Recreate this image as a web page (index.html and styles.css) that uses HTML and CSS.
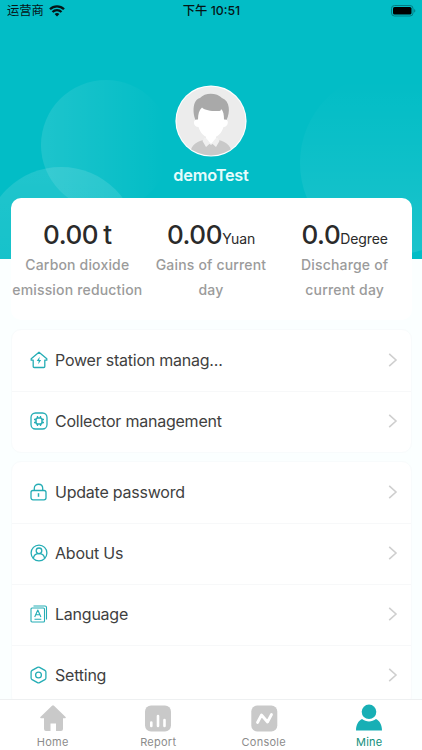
FILE: index.html
```html
<!DOCTYPE html>
<html lang="en">
<head>
    <meta charset="UTF-8">
    <meta name="viewport" content="width=device-width, initial-scale=1.0">
    <title>Mine</title>
    <link rel="stylesheet" href="styles.css">
</head>
<body>
    <div class="app">
        <header class="header">
            <!-- Background bubbles -->
            <div class="bubble bubble-top"></div>
            <div class="bubble bubble-left"></div>
            <div class="bubble bubble-right"></div>

            <div class="status-bar">
                <div class="carrier">
                    <span>运营商</span>
                    <svg width="16" height="12" viewBox="0 0 16 12" fill="none" stroke="#061416" stroke-width="2.3">
                        <path d="M1 4.2a10 10 0 0 1 14 0"/>
                        <path d="M3.5 7a6.4 6.4 0 0 1 9 0"/>
                        <path d="M8 11.6 5.6 9.1a3.4 3.4 0 0 1 4.8 0z" fill="#061416" stroke="none"/>
                    </svg>
                </div>
                <span class="time">下午 10:51</span>
                <svg class="battery" width="25" height="12" viewBox="0 0 25 12">
                    <rect x="0.5" y="0.5" width="21.5" height="10.5" rx="3" fill="none" stroke="#037c84"/>
                    <rect x="2" y="2" width="18.5" height="7.5" rx="1.6" fill="#000"/>
                    <path d="M23.2 4v3.6c1.5-.5 1.5-3.1 0-3.6z" fill="#037c84"/>
                </svg>
            </div>

            <div class="profile">
                <svg class="avatar" width="72" height="72" viewBox="0 0 72 72">
                    <clipPath id="face"><circle cx="36" cy="36" r="34.5"/></clipPath>
                    <circle cx="36" cy="36" r="35.6" fill="#fff"/>
                    <circle cx="36" cy="36" r="34.5" fill="#ececec"/>
                    <g clip-path="url(#face)">
                        <path d="M15 72c0-10 4-15 14-17l7 5 7-5c10 2 14 7 14 17z" fill="#c9c9c9"/>
                        <path d="M29.5 53l-2 3 3.5 6 5-4.500 5 4.500 3.500-6-2-3z" fill="#f0f0f0"/>
                        <path d="M31 46h10v7l-5 6-5-6z" fill="#fff"/>
                        <path d="M21 36c-3.500-7-4-21 4-23 5-6 17-5.500 22 0 8 3 8.500 14 4.500 22z" fill="#a9a9a9"/>
                        <path d="M23 34.500c0-5 1-9.500 4-12 3 3 11.500 4 17.500 3.500 1 0 1.500-1 1.500-2 2.500 2 3 6 3 10.500 5.500-1 5 7-.5 7.500-1.500 5.500-6 11-12.500 11s-11-5.500-12.500-11c-6-.5-6-8.500-.5-7.500z" fill="#fff"/>
                    </g>
                </svg>
                <div class="username">demoTest</div>
            </div>
        </header>

        <main class="content">
            <section class="stats">
                <div class="stat">
                    <div class="stat-value">0.00<span class="ton">t</span></div>
                    <div class="stat-label">Carbon dioxide<br>emission reduction</div>
                </div>
                <div class="stat">
                    <div class="stat-value">0.00<small>Yuan</small></div>
                    <div class="stat-label">Gains of current<br>day</div>
                </div>
                <div class="stat">
                    <div class="stat-value">0.0<small>Degree</small></div>
                    <div class="stat-label">Discharge of<br>current day</div>
                </div>
            </section>

            <section class="menu">
                <div class="row">
                    <svg class="icon" viewBox="0 0 18 18">
                        <path d="M1.200 7.800 9 1.200l7.800 6.600v1.400h-2V15.500a1 1 0 0 1-1 1H4.200a1 1 0 0 1-1-1V9.200h-2z"/>
                        <path d="M9.700 5.800 6.700 9.900h2l-.5 3.400 3-4.300h-2z" fill="#25adb5" stroke="none"/>
                    </svg>
                    <span class="row-text">Power station manag...</span>
                    <svg class="arrow" viewBox="0 0 10 16"><path d="M1.200 1.800 8 8l-6.800 6.200"/></svg>
                </div>
                <div class="row">
                    <svg class="icon" viewBox="0 0 18 18">
                        <rect x="1" y="1" width="16" height="16" rx="4.500"/>
                        <rect x="6" y="6" width="6" height="6" rx="1.800" stroke-width="1.500"/>
                        <path d="M7.500 4v2M10.500 4v2M7.500 12v2M10.500 12v2M4 7.500h2M4 10.500h2M12 7.500h2M12 10.500h2"/>
                    </svg>
                    <span class="row-text">Collector management</span>
                    <svg class="arrow" viewBox="0 0 10 16"><path d="M1.200 1.800 8 8l-6.800 6.200"/></svg>
                </div>
            </section>

            <section class="menu">
                <div class="row">
                    <svg class="icon" viewBox="0 0 18 18">
                        <rect x="1" y="7.500" width="15" height="9.300" rx="2"/>
                        <path d="M4.300 7.500V5.300c0-5.400 8.400-5.400 8.400 0v2.200"/>
                        <path d="M8.500 10.200v3.600" stroke-width="1.500"/>
                    </svg>
                    <span class="row-text">Update password</span>
                    <svg class="arrow" viewBox="0 0 10 16"><path d="M1.200 1.800 8 8l-6.800 6.200"/></svg>
                </div>
                <div class="row">
                    <svg class="icon" viewBox="0 0 18 18">
                        <circle cx="9" cy="9" r="7.900"/>
                        <circle cx="9" cy="6.800" r="2.800"/>
                        <path d="M3.300 14.500c1-6.400 10.400-6.400 11.400 0"/>
                    </svg>
                    <span class="row-text">About Us</span>
                    <svg class="arrow" viewBox="0 0 10 16"><path d="M1.200 1.800 8 8l-6.800 6.200"/></svg>
                </div>
                <div class="row">
                    <svg class="icon thin" viewBox="0 0 18 18">
                        <rect x="1" y="3" width="13.500" height="14" rx="1"/>
                        <path d="M3.500 1h11.500a1.500 1.500 0 0 1 1.500 1.500V14.500M4.700 12 7.800 5l3.100 7M5.700 9.800h4.200M4.500 14.300h6.800"/>
                    </svg>
                    <span class="row-text">Language</span>
                    <svg class="arrow" viewBox="0 0 10 16"><path d="M1.200 1.800 8 8l-6.800 6.200"/></svg>
                </div>
                <div class="row">
                    <svg class="icon" viewBox="0 0 18 18">
                        <path d="M7.500 1.400a2 2 0 0 1 2 0l5.400 3a2 2 0 0 1 1 1.700v5.800a2 2 0 0 1-1 1.700l-5.400 3a2 2 0 0 1-2 0l-5.400-3a2 2 0 0 1-1-1.700V6.100a2 2 0 0 1 1-1.700z"/>
                        <circle cx="8.500" cy="9" r="2.900"/>
                    </svg>
                    <span class="row-text">Setting</span>
                    <svg class="arrow" viewBox="0 0 10 16"><path d="M1.200 1.800 8 8l-6.800 6.200"/></svg>
                </div>
            </section>
        </main>

        <nav class="tabbar">
            <div class="tab">
                <svg viewBox="0 0 28 28" fill="#c9c9c9">
                    <path d="M13 1.700q1-.9 2 0L26.600 13q.9 1.200-.8 1.200H24V25a2 2 0 0 1-2 2h-5v-7.500h-5.500V27H7a2 2 0 0 1-2-2V14.200H2.200q-1.700 0-.8-1.200z"/>
                </svg>
                <span>Home</span>
            </div>
            <div class="tab">
                <svg viewBox="0 0 28 28">
                    <rect x="1" y="1.500" width="26" height="26" rx="6" fill="#c9c9c9"/>
                    <path d="M7.300 18.500v3.500M14 12v10M20.500 16v6" stroke="#fff" stroke-width="2.600" stroke-linecap="round"/>
                </svg>
                <span>Report</span>
            </div>
            <div class="tab">
                <svg viewBox="0 0 28 28">
                    <rect x="1.300" y="1.500" width="26" height="26" rx="6" fill="#c9c9c9"/>
                    <path d="M7.500 18.500 11.500 11l6 7L21.500 10.500" fill="none" stroke="#fff" stroke-width="2.800" stroke-linecap="round" stroke-linejoin="round"/>
                </svg>
                <span>Console</span>
            </div>
            <div class="tab active">
                <svg viewBox="0 0 28 28" fill="#18afb5">
                    <circle cx="14" cy="7.800" r="7.300"/>
                    <path d="M1 26.500c0-6 2.500-9.700 6-11.500 4 3.300 10 3.300 14 0 3.500 1.800 6 5.500 6 11.500z"/>
                </svg>
                <span>Mine</span>
            </div>
        </nav>
    </div>
</body>
</html>
```

FILE: styles.css
```css
* {
    box-sizing: border-box;
}

body {
    margin: 0;
    font-family: Inter, "Noto Sans CJK SC", sans-serif;
    background-color: #fbffff;
}

svg {
    display: block;
    flex-shrink: 0;
}

.app {
    height: 750px;
    display: flex;
    flex-direction: column;
    overflow: hidden;
}

/* Header */
.header {
    position: relative;
    height: 259px;
    flex-shrink: 0;
    overflow: hidden;
    background-color: #02bdc6;
}

.bubble {
    position: absolute;
    border-radius: 50%;
}

.bubble-top {
    left: 41px;
    top: 80px;
    width: 130px;
    height: 130px;
    background: linear-gradient(90deg, rgba(255, 255, 255, 0.11), rgba(255, 255, 255, 0) 95%);
}

.bubble-left {
    left: -16px;
    top: 167px;
    width: 154px;
    height: 154px;
    background: linear-gradient(rgba(255, 255, 255, 0.12), rgba(255, 255, 255, 0.05));
}

.bubble-right {
    left: 300px;
    top: 71px;
    width: 184px;
    height: 184px;
    background: linear-gradient(rgba(255, 255, 255, 0) 5%, rgba(255, 255, 255, 0.1));
}

.status-bar {
    position: relative;
    display: grid;
    grid-template-columns: 1fr auto 1fr;
    align-items: center;
    height: 22px;
    padding: 0 6px 0 7px;
    color: #061416;
    font-size: 12.3px;
    line-height: 22px;
}

.carrier {
    display: flex;
    align-items: center;
    gap: 5px;
}

.time {
    font-weight: 500;
    font-size: 12.3px;
}

.battery {
    justify-self: end;
}

.profile {
    position: relative;
    display: flex;
    flex-direction: column;
    align-items: center;
    padding-top: 63px;
}

.username {
    margin-top: 7px;
    line-height: 22px;
    font-size: 16.3px;
    font-weight: 600;
    letter-spacing: -0.2px;
    color: #e6fcfc;
}

/* Cards */
.content {
    position: relative;
    flex: 1;
    min-height: 0;
    margin-top: -61px;
    padding: 0 10.5px;
    overflow: hidden;
}

.stats {
    display: grid;
    grid-template-columns: repeat(3, 1fr);
    height: 122px;
    padding-top: 18px;
    border-radius: 10px;
    background-color: #fff;
    text-align: center;
}

.stat-value {
    height: 36px;
    line-height: 37px;
    font-size: 26px;
    font-weight: 550;
    letter-spacing: -0.4px;
    color: #2a2a2a;
    white-space: nowrap;
}

.stat-value small {
    font-size: 14px;
    font-weight: 400;
    letter-spacing: -0.1px;
}

.ton {
    margin-left: 5px;
}

.stat-label {
    line-height: 25px;
    font-size: 14px;
    font-weight: 500;
    letter-spacing: 0.17px;
    color: #9b9b9b;
    white-space: nowrap;
}

.menu {
    margin-top: 9px;
    border: 1px solid #f8fbfc;
    border-radius: 10px;
    background-color: #fff;
}

.menu + .menu {
    margin-top: 8px;
}

.row {
    display: flex;
    align-items: center;
    height: 61px;
    padding: 0 13px 1px 18px;
}

.row + .row {
    padding-bottom: 2px;
    border-top: 1px solid #f7f8f9;
}

.icon {
    width: 18px;
    height: 18px;
    fill: none;
    stroke: #25adb5;
    stroke-width: 1.3;
    stroke-linejoin: round;
}

.thin {
    stroke-width: 1.1;
}

.row-text {
    flex: 1;
    margin-left: 7.5px;
    font-size: 16px;
    letter-spacing: -0.23px;
    color: #3f3f3f;
}

.arrow {
    width: 10px;
    height: 16px;
    fill: none;
    stroke: #cfcfcf;
    stroke-width: 1.6;
}

/* Bottom tabs */
.tabbar {
    display: grid;
    grid-template-columns: repeat(4, 1fr);
    height: 51px;
    flex-shrink: 0;
    padding-top: 4px;
    border-top: 1px solid #eef0f1;
    background-color: #fff;
}

.tab {
    display: flex;
    flex-direction: column;
    align-items: center;
    font-size: 11px;
    line-height: 14px;
    letter-spacing: 0.25px;
    color: #8c8c8c;
}

.tab svg {
    width: 28px;
    height: 28px;
    margin-bottom: 3px;
}

.tab.active {
    color: #128f7c;
}
```
